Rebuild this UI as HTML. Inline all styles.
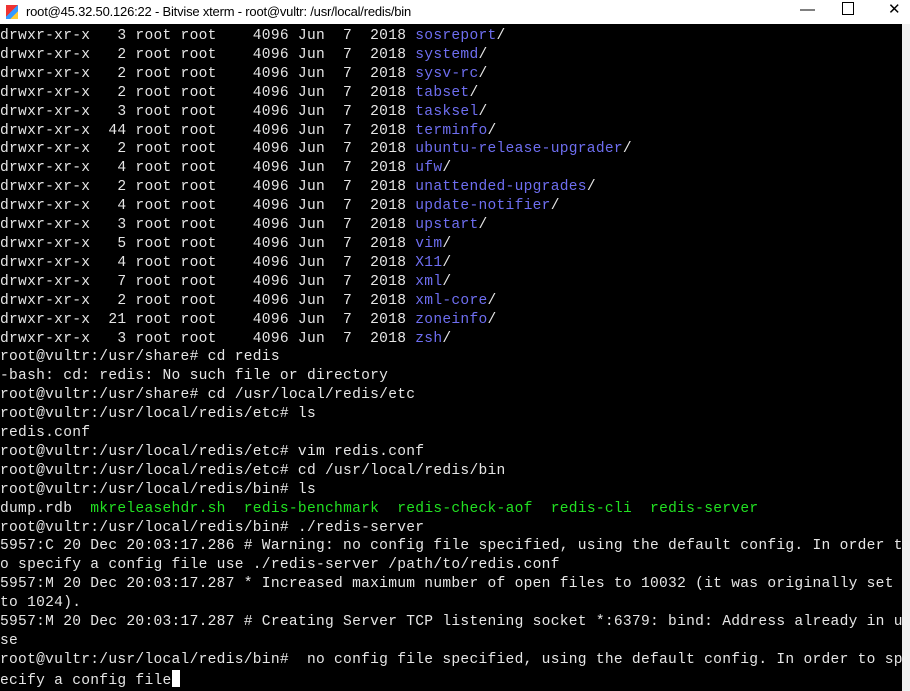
<!DOCTYPE html>
<html><head><meta charset="utf-8"><style>
html,body{margin:0;padding:0;width:910px;height:691px;overflow:hidden;background:#000}
#title{position:absolute;left:0;top:0;width:910px;height:24px;background:#fff;font-family:"Liberation Sans",sans-serif;font-size:13px;color:#000}
#title .t{position:absolute;left:26px;top:4px;letter-spacing:-0.2px}
#icon{position:absolute;left:6px;top:5px;width:12px;height:14px;background:linear-gradient(135deg,#e33 0 45%,#39f 45% 70%,#fc3 70%)}
#title .b{position:absolute;top:1px;font-size:15px}
#term{position:absolute;left:0;top:27px;width:902px;font-family:"Liberation Mono",monospace;font-size:14.6px;letter-spacing:0.27px;line-height:18.9px;color:#e6e6e6;white-space:pre}
.d{color:#6e6ef0}.g{color:#22e022}
#sb{position:absolute;left:902px;top:24px;width:8px;height:667px;background:#f0f0f0}
#cur{display:inline-block;width:8px;height:17px;background:#fff;vertical-align:-3px}
</style></head><body>
<div id="title"><div id="icon"></div><span class="t">root@45.32.50.126:22 - Bitvise xterm - root@vultr: /usr/local/redis/bin</span>
<span class="b" style="left:800px">—</span><span class="b" style="left:842px;top:2px;width:10px;height:11px;border:1px solid #000;display:block"></span><span class="b" style="left:888px;top:0">✕</span></div>
<div id="sb"></div>
<div id="term">drwxr-xr-x   3 root root    4096 Jun  7  2018 <span class="d">sosreport</span>/
drwxr-xr-x   2 root root    4096 Jun  7  2018 <span class="d">systemd</span>/
drwxr-xr-x   2 root root    4096 Jun  7  2018 <span class="d">sysv-rc</span>/
drwxr-xr-x   2 root root    4096 Jun  7  2018 <span class="d">tabset</span>/
drwxr-xr-x   3 root root    4096 Jun  7  2018 <span class="d">tasksel</span>/
drwxr-xr-x  44 root root    4096 Jun  7  2018 <span class="d">terminfo</span>/
drwxr-xr-x   2 root root    4096 Jun  7  2018 <span class="d">ubuntu-release-upgrader</span>/
drwxr-xr-x   4 root root    4096 Jun  7  2018 <span class="d">ufw</span>/
drwxr-xr-x   2 root root    4096 Jun  7  2018 <span class="d">unattended-upgrades</span>/
drwxr-xr-x   4 root root    4096 Jun  7  2018 <span class="d">update-notifier</span>/
drwxr-xr-x   3 root root    4096 Jun  7  2018 <span class="d">upstart</span>/
drwxr-xr-x   5 root root    4096 Jun  7  2018 <span class="d">vim</span>/
drwxr-xr-x   4 root root    4096 Jun  7  2018 <span class="d">X11</span>/
drwxr-xr-x   7 root root    4096 Jun  7  2018 <span class="d">xml</span>/
drwxr-xr-x   2 root root    4096 Jun  7  2018 <span class="d">xml-core</span>/
drwxr-xr-x  21 root root    4096 Jun  7  2018 <span class="d">zoneinfo</span>/
drwxr-xr-x   3 root root    4096 Jun  7  2018 <span class="d">zsh</span>/
root@vultr:/usr/share# cd redis
-bash: cd: redis: No such file or directory
root@vultr:/usr/share# cd /usr/local/redis/etc
root@vultr:/usr/local/redis/etc# ls
redis.conf
root@vultr:/usr/local/redis/etc# vim redis.conf
root@vultr:/usr/local/redis/etc# cd /usr/local/redis/bin
root@vultr:/usr/local/redis/bin# ls
dump.rdb  <span class="g">mkreleasehdr.sh</span>  <span class="g">redis-benchmark</span>  <span class="g">redis-check-aof</span>  <span class="g">redis-cli</span>  <span class="g">redis-server</span>
root@vultr:/usr/local/redis/bin# ./redis-server
5957:C 20 Dec 20:03:17.286 # Warning: no config file specified, using the default config. In order t
o specify a config file use ./redis-server /path/to/redis.conf
5957:M 20 Dec 20:03:17.287 * Increased maximum number of open files to 10032 (it was originally set
to 1024).
5957:M 20 Dec 20:03:17.287 # Creating Server TCP listening socket *:6379: bind: Address already in u
se
root@vultr:/usr/local/redis/bin#  no config file specified, using the default config. In order to sp
ecify a config file<span id="cur"></span></div>
</body></html>
